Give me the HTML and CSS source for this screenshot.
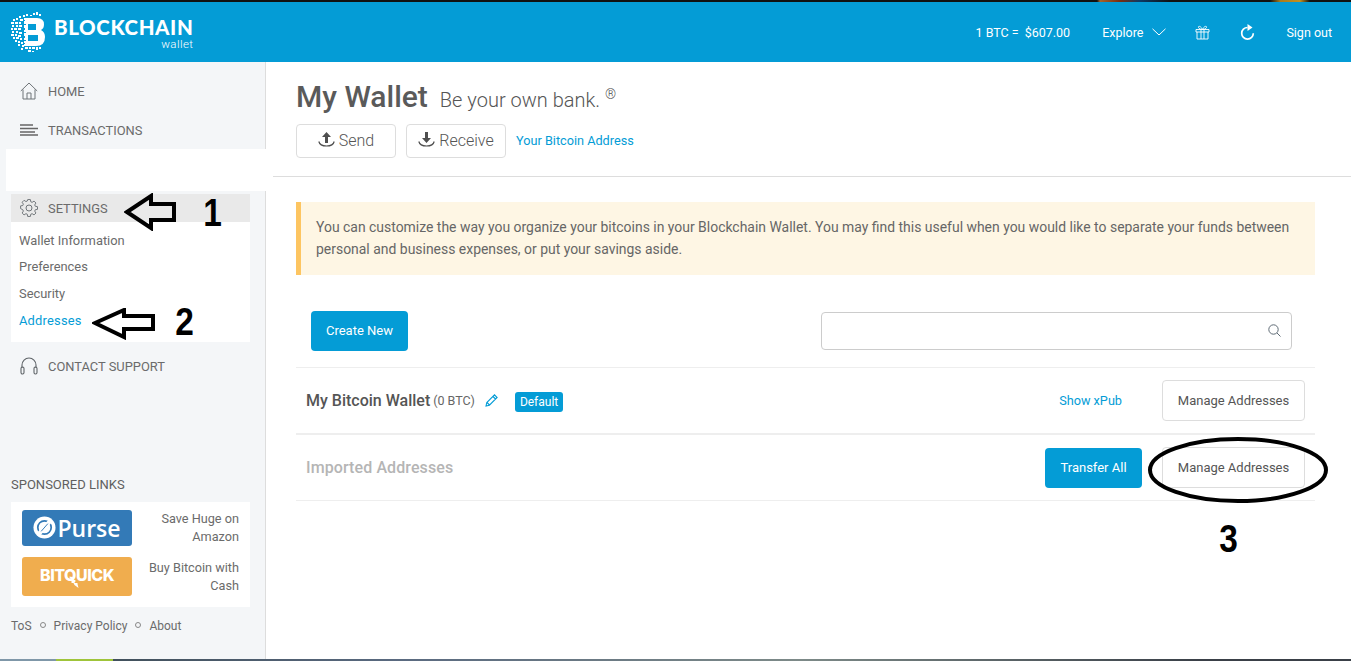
FILE: index.html
```html
<!DOCTYPE html>
<html lang="en">
<head>
<meta charset="utf-8">
<title>My Wallet</title>
<link rel="stylesheet" href="styles.css">
</head>
<body>
<div class="strip-top"></div>
<header class="topbar">
  <a class="brand">
    <svg class="brand-mark" width="36" height="42" viewBox="0 0 36 42">
      <path fill="#fff" fill-rule="evenodd" d="M13 7h13q7 0 7 6.500 0 4-3 5.500 4 2 4 7 0 9-9 9H13zM17 13v6h8v-6zM17 24v6h10v-6z"/>
      <path fill="#fff" d="M8 5h2v2H8zM12 4h2v2h-2zM15 3h2v2h-2zM19 4h2v1h-2zM22 2h2v2h-2zM25 1h2v3h-2zM28 3h2v2h-2zM5 7h2v2H5zM9 8h3v2H9zM2 8h2v2H2zM0 11h3v2H0zM4 11h3v2H4zM8 11h2v2H8zM1 14h2v2H1zM5 14h2v2H5zM8 14h3v2H8zM0 17h2v2H0zM3 17h3v2H3zM7 17h3v2H7zM1 20h2v2H1zM5 20h2v2H5zM8 21h3v2H8zM0 23h3v2H0zM4 23h2v2H4zM7 24h3v2H7zM2 26h2v2H2zM5 26h3v2H5zM9 27h2v2H9zM4 29h2v2H4zM7 30h2v2H7zM10 31h2v2h-2zM7 33h2v2H7zM11 34h2v2h-2zM14 36h3v2h-3zM18 36h2v2h-2zM21 36h3v2h-3zM25 36h2v3h-2zM28 36h2v2h-2zM10 37h2v2h-2zM17 39h3v2h-3zM21 40h2v1h-2z"/>
      <path fill="#049cd6" d="M13 9h1v1h-1zM13 13h2v1h-2zM13 17h1v2h-1zM13 21h2v1h-2zM13 25h1v2h-1zM13 29h2v1h-2zM13 32h1v1h-1z"/>
    </svg>
    <span class="brand-text">
      <span class="brand-name">BLOCKCHAIN</span>
      <span class="brand-sub">wallet</span>
    </span>
  </a>
  <nav class="topnav">
    <span class="rate"><span>1 BTC =</span><span>$607.00</span></span>
    <span class="explore">Explore
      <svg width="14" height="8" viewBox="0 0 14 8"><path d="M.5.8 7 7 13.500.8" fill="none" stroke="#fff" stroke-width="1"/></svg>
    </span>
    <svg class="top-icon" width="15" height="15" viewBox="0 0 15 15" fill="none" stroke="#fff" stroke-width=".9"><path d="M1 4.500h13v2.500H1zM2 7v7h11V7M6 4.500V14M9 4.500V14M7.500 4.500C6 1 3 .5 3.500 2.500c.3 1.300 2.500 2 4 2 1.500 0 3.700-.7 4-2C12 .5 9 1 7.500 4.500z"/></svg>
    <svg class="top-icon" width="15" height="16" viewBox="0 0 15 16"><path d="M7.500 3.500A5.800 5.800 0 1 0 13.300 9.300" fill="none" stroke="#fff" stroke-width="1.700"/><path d="M7.500 0v7l5-3.500z" fill="#fff"/></svg>
    <span>Sign out</span>
  </nav>
</header>
<div class="shell">
  <aside class="sidebar">
    <div class="nav-item nav-first">
      <svg width="18" height="18" viewBox="0 0 18 18" fill="none" stroke="#6f7478" stroke-width="1"><path d="M.8 9 9 1l8.200 8M3 7.500V17h12V7.500M7 17v-6h4v6"/></svg>
      <span>HOME</span>
    </div>
    <div class="nav-item">
      <svg width="18" height="12" viewBox="0 0 18 12" fill="none" stroke="#666"><path d="M0 1h13M0 4.500h18M0 8h15M0 11h18" stroke-width="1.400"/></svg>
      <span>TRANSACTIONS</span>
    </div>
    <div class="nav-gap"></div>
    <div class="nav-item nav-active">
      <svg width="18" height="18" viewBox="0 0 18 18" fill="none" stroke="#6f7478" stroke-width="1"><path d="M7.600 1h2.800l.4 2.300 1.400.6 2-1.300 2 2-1.300 2 .6 1.400 2.300.4v2.800l-2.300.4-.6 1.400 1.300 2-2 2-2-1.300-1.400.6-.4 2.300H7.600l-.4-2.300-1.400-.6-2 1.300-2-2 1.300-2-.6-1.400L.2 10.400V7.600l2.300-.4.6-1.400-1.300-2 2-2 2 1.300 1.400-.6z" transform="translate(.4 -.4) scale(.96)"/><circle cx="9" cy="9" r="3"/></svg>
      <span>SETTINGS</span>
    </div>
    <div class="subnav">
      <span>Wallet Information</span>
      <span>Preferences</span>
      <span>Security</span>
      <span class="subnav-on">Addresses</span>
    </div>
    <div class="nav-item nav-support">
      <svg width="18" height="18" viewBox="0 0 18 18" fill="none" stroke="#5f6468" stroke-width="1.100"><path d="M2 11V8a7 7 0 0 1 14 0v3"/><rect x="1" y="10" width="3" height="7" rx="1.400"/><rect x="14" y="10" width="3" height="7" rx="1.400"/></svg>
      <span>CONTACT SUPPORT</span>
    </div>
    <div class="sponsored">
      <h4 class="sponsored-title">SPONSORED LINKS</h4>
      <div class="sponsored-box">
        <div class="ad">
          <span class="ad-logo ad-purse">
            <svg width="23" height="23" viewBox="0 0 24 24"><circle cx="12" cy="12" r="11.500" fill="#fff"/><circle cx="12" cy="12" r="7" fill="none" stroke="#337ab7" stroke-width="1.800"/><path d="M18 5 6 19" stroke="#fff" stroke-width="4.500"/><path d="M15.500 8 8.500 16" stroke="#337ab7" stroke-width="1"/></svg>
            <span>Purse</span>
          </span>
          <span class="ad-text">Save Huge on Amazon</span>
        </div>
        <div class="ad">
          <span class="ad-logo ad-bitquick">BITQUICK
            <svg class="bolt" width="9" height="8" viewBox="0 0 8 8"><path d="M0 0h4L3 3h3v1l1 4-4-3-1-2H0z" fill="#fff"/></svg>
          </span>
          <span class="ad-text">Buy Bitcoin with Cash</span>
        </div>
      </div>
      <div class="legal">
        <span>ToS</span><i class="dot"></i><span>Privacy Policy</span><i class="dot"></i><span>About</span>
      </div>
    </div>
  </aside>
  <main class="content">
    <div class="page-head">
      <div class="title-line">
        <h1 class="title">My Wallet</h1>
        <span class="tagline">Be your own bank. <sup>®</sup></span>
      </div>
      <div class="actions">
        <button class="btn-action">
          <svg width="17" height="16" viewBox="0 0 17 16"><path d="M8.500 0 13 5h-3v6H7V5H4z" fill="#4f4f4f"/><path d="M.8 9.500c1.500 6 14 6 15.400 0" fill="none" stroke="#4f4f4f" stroke-width="1.200"/></svg>
          Send
        </button>
        <button class="btn-action">
          <svg width="17" height="16" viewBox="0 0 17 16"><path d="M8.500 11 13 6h-3V0H7v6H4z" fill="#4f4f4f"/><path d="M.8 9.500c1.500 6 14 6 15.400 0" fill="none" stroke="#4f4f4f" stroke-width="1.200"/></svg>
          Receive
        </button>
        <a class="link link-address">Your Bitcoin Address</a>
      </div>
    </div>
    <section class="panel">
      <p class="notice">You can customize the way you organize your bitcoins in your Blockchain Wallet. You may find this useful when you would like to separate your funds between personal and business expenses, or put your savings aside.</p>
      <div class="toolbar">
        <button class="btn btn-primary btn-create">Create New</button>
        <div class="search">
          <svg width="13" height="13" viewBox="0 0 13 13" fill="none" stroke="#5f6b75" stroke-width="1"><circle cx="5.500" cy="5.500" r="4.700"/><path d="M9 9l3.500 3.500"/></svg>
        </div>
      </div>
      <div class="row row-wallet">
        <div class="row-label">
          <strong class="wallet-name">My Bitcoin Wallet</strong>
          <span class="wallet-bal">(0 BTC)</span>
          <svg class="pencil" width="13" height="13" viewBox="0 0 13 13" fill="none" stroke="#049cd6" stroke-width="1.100"><path d="M1 12l.8-3.500L9.500.9l2.600 2.600-7.700 7.700zM8 2.500l2.500 2.500M2 8.500 4.500 11"/></svg>
          <span class="badge">Default</span>
        </div>
        <a class="link link-xpub">Show xPub</a>
        <button class="btn btn-outline">Manage Addresses</button>
      </div>
      <div class="row row-imported">
        <strong class="imported-name">Imported Addresses</strong>
        <button class="btn btn-primary btn-transfer">Transfer All</button>
        <button class="btn btn-outline">Manage Addresses</button>
      </div>
    </section>
  </main>
</div>
<div class="strip-bottom"></div>

<div class="patch"></div>
<svg class="mark mark-arrow1" width="54" height="38" viewBox="0 0 54 38"><path d="M3 19 27 3v8h23v16H27v8z" fill="none" stroke="#000" stroke-width="4"/></svg>
<svg class="mark mark-arrow2" width="64" height="32" viewBox="0 0 64 32"><path d="M3 15 32 2v6h29v13H32v8z" fill="none" stroke="#000" stroke-width="4"/></svg>
<span class="mark mark-num mark-n1">1</span>
<span class="mark mark-num mark-n2">2</span>
<span class="mark mark-num mark-n3">3</span>
<svg class="mark mark-ring" width="182" height="68" viewBox="0 0 182 68"><ellipse cx="91" cy="34" rx="88" ry="31" fill="none" stroke="#000" stroke-width="4"/></svg>
</body>
</html>
```

FILE: styles.css
```css
* { box-sizing: border-box; }
html, body { margin: 0; padding: 0; height: 100%; overflow: hidden; }
body {
  position: relative;
  display: flex;
  flex-direction: column;
  height: 661px;
  font-family: Roboto, "Liberation Sans", sans-serif;
  font-size: 13px;
  color: #5f5f5f;
  background: #fff;
}
h1, h4, p { margin: 0; }
button { font-family: inherit; cursor: pointer; }

.strip-top {
  height: 2px;
  flex: none;
  background: linear-gradient(90deg, #111 0, #111 1097px, #a5642a 1100px, #7a2c10 1120px, #0b3a66 1140px, #111 1170px, #111 1270px, #a87a1c 1280px, #c49020 1300px, #111 1310px);
}
.strip-bottom {
  height: 2px;
  flex: none;
  background: linear-gradient(90deg, #7f97a8 0, #7f97a8 56px, #9fc43a 56px, #9fc43a 113px, #41505c 113px, #5a6a80 400px, #7d8a88 800px, #3a4048 1200px);
}

.topbar {
  height: 60px;
  flex: none;
  display: flex;
  align-items: center;
  justify-content: space-between;
  padding: 0 19px 0 11px;
  background: #049cd6;
  color: #fff;
}
.brand { display: flex; align-items: center; gap: 7px; }
.brand-mark { display: block; }
.brand-text { display: flex; flex-direction: column; align-items: flex-end; margin-top: 3px; }
.brand-name { font-family: Lato, sans-serif; font-weight: 900; font-size: 20.500px; line-height: 20px; letter-spacing: .6px; }
.brand-sub { margin-top: 2px; font-size: 11.500px; line-height: 11px; font-weight: 300; letter-spacing: .4px; }
.topnav { display: flex; align-items: center; font-size: 12.500px; }
.rate { display: flex; gap: 6px; margin-right: 32px; }
.explore { display: flex; align-items: center; gap: 9px; margin-right: 29px; }
.top-icon { display: block; }
.topnav .top-icon:nth-of-type(1) { margin-right: 30px; }
.topnav .top-icon:nth-of-type(2) { margin-right: 31px; }

.shell { flex: 1; display: flex; min-height: 0; }
.sidebar {
  width: 266px;
  flex: none;
  display: flex;
  flex-direction: column;
  padding: 0 15px 0 11px;
  background: #f4f6f8;
  border-right: 1px solid #ddd;
}
.nav-item {
  display: flex;
  align-items: center;
  gap: 10px;
  height: 28px;
  padding-left: 9px;
  font-size: 12.900px;
  color: #6b6b6b;
}
.nav-item svg { width: 18px; flex: none; }
.nav-first { margin-top: 15px; }
.nav-item + .nav-item { margin-top: 11px; }
.nav-gap { height: 50px; }
.nav-active { background: #e9e9e9; }
.nav-item.nav-active { margin-top: 0; }
.subnav {
  display: flex;
  flex-direction: column;
  height: 120px;
  padding: 5.500px 8px 0;
  background: #fff;
  font-size: 12.900px;
  line-height: 26.600px;
  color: #6b6b6b;
}
.subnav-on { margin-top: .7px; color: #049cd6; letter-spacing: .2px; }
.nav-support { margin-top: 10px; }

.sponsored { margin-top: auto; padding-bottom: 24px; }
.sponsored-title { font-size: 13px; font-weight: 400; color: #5f5f5f; line-height: 16px; margin-bottom: 9px; }
.sponsored-box {
  height: 105px;
  padding: 8px 11px 0;
  background: #fff;
  display: flex;
  flex-direction: column;
  gap: 11px;
}
.ad { display: flex; align-items: center; justify-content: space-between; }
.ad-logo {
  position: relative;
  width: 110px;
  display: flex;
  align-items: center;
  justify-content: center;
  flex: none;
  border-radius: 3px;
  color: #fff;
}
.ad-purse { height: 36px; gap: 1px; padding-bottom: 1px; background: #337ab7; font-size: 23px; font-weight: 600; font-family: "Open Sans", sans-serif; }
.ad-bitquick { height: 39px; padding-bottom: 3px; background: #f0ad4e; font-family: Inter, sans-serif; font-weight: 800; font-size: 16px; letter-spacing: -.5px; }
.bolt { position: absolute; left: 49px; top: 23px; }
.ad-text { width: 95px; text-align: right; font-size: 12.700px; line-height: 18px; color: #6b6b6b; }
.legal { display: flex; align-items: center; margin-top: 11px; font-size: 12px; line-height: 17px; color: #6b6b6b; }
.dot { width: 6px; height: 6px; margin: -3px 8px 0; border: 1px solid #888; border-radius: 50%; }

.content { flex: 1; min-width: 0; padding-left: 7px; }
.page-head { height: 115px; padding: 16px 0 0 23px; border-bottom: 1px solid #ddd; }
.title-line { display: flex; align-items: baseline; gap: 12px; height: 46px; }
.title { font-size: 30px; font-weight: 500; line-height: 38px; color: #5a5a5a; }
.tagline { font-size: 20px; font-weight: 300; color: #555; }
.tagline sup { font-size: 14px; line-height: 0; }
.actions { display: flex; align-items: center; }
.btn-action {
  width: 100px;
  height: 34px;
  margin-right: 10px;
  display: flex;
  align-items: center;
  justify-content: center;
  gap: 4px;
  padding: 0 0 2px;
  border: 1px solid #ddd;
  border-radius: 4px;
  background: #fff;
  color: #555;
  font-size: 16px;
  font-weight: 300;
}
.link { color: #049cd6; font-size: 12.700px; }
.link-address { margin-top: -2px; }
.panel { padding: 25px 36px 0 23px; }
.notice {
  height: 73px;
  padding: 14px 20px 0 15px;
  border-left: 5px solid #fdc561;
  background: #fef6e4;
  font-size: 13.950px;
  line-height: 22px;
  color: #666;
}
.toolbar { display: flex; align-items: center; justify-content: space-between; height: 93px; padding: 19px 23px 0 15px; border-bottom: 1px solid #eee; }
.btn { height: 41px; border-radius: 4px; font-size: 13px; }
.btn-primary { border: 0; background: #049cd6; color: #fff; }
.btn-create { width: 97px; height: 40px; }
.search {
  width: 471px;
  height: 38px;
  display: flex;
  align-items: center;
  justify-content: flex-end;
  padding-right: 10px;
  border: 1px solid #ccc;
  border-radius: 4px;
}
.row { display: flex; align-items: center; padding: 0 10px; }
.row-wallet { height: 67px; border-bottom: 2px solid #eee; }
.row-imported { height: 66px; border-bottom: 1px solid #eee; }
.row-label { flex: 1; display: flex; align-items: center; }
.wallet-name { font-size: 16px; font-weight: 500; color: #555; }
.wallet-bal { margin-left: 3px; font-size: 12.500px; color: #666; }
.pencil { margin-left: 10px; }
.badge { margin: 2px 0 0 17px; padding: 0 5px; height: 20px; line-height: 20px; border-radius: 3px; background: #049cd6; color: #fff; font-size: 12px; }
.link-xpub { margin-right: 40px; }
.btn-outline { width: 143px; border: 1px solid #ddd; background: #fff; color: #555; }
.imported-name { flex: 1; font-size: 16px; font-weight: 500; letter-spacing: .1px; color: #b5b5b5; }
.btn-transfer { width: 97px; height: 40px; margin-right: 20px; }

.patch { position: absolute; left: 6px; top: 149px; width: 262px; height: 42px; background: #fff; }
.mark { position: absolute; display: block; }
.mark-arrow1 { left: 124px; top: 193px; }
.mark-arrow2 { left: 92px; top: 308px; }
.mark-ring { left: 1147px; top: 436px; }
.mark-num { font-family: "Liberation Sans", sans-serif; font-weight: 700; font-size: 38px; line-height: 36px; color: #000; transform: scaleX(.88); }
.mark-n1 { left: 202px; top: 195px; }
.mark-n2 { left: 174px; top: 304px; }
.mark-n3 { left: 1218px; top: 521px; }
```
